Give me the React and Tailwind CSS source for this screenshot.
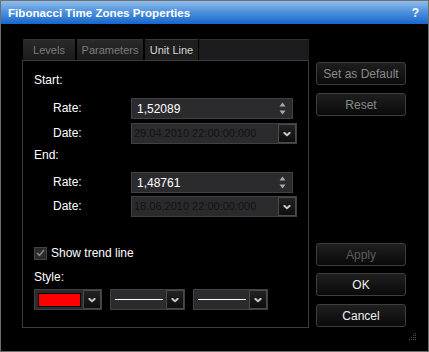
import React from "react";

const font = { fontFamily: '"Liberation Sans", Arial, sans-serif' };

function Chevron() {
  return (
    <svg width="8" height="6" viewBox="0 0 8 6">
      <polygon points="0.5,1 2,1 4,3 6,1 7.5,1 7.5,2.5 4,5.5 0.5,2.5" fill="#c8c8c8" />
    </svg>
  );
}

function DropBtn() {
  return (
    <div className="w-[18px] h-full flex items-center justify-center bg-linear-to-b from-[#222] to-[#0e0e0e] border border-[#4a4a4a]">
      <Chevron />
    </div>
  );
}

function Spin() {
  return (
    <div className="flex flex-col items-center gap-[3px] mr-[6px]">
      <svg width="7" height="5" viewBox="0 0 7 5">
        <polygon points="3.5,0.5 6.5,4.5 0.5,4.5" fill="#a8a8a8" />
      </svg>
      <svg width="7" height="5" viewBox="0 0 7 5">
        <polygon points="0.5,0.5 6.5,0.5 3.5,4.5" fill="#a8a8a8" />
      </svg>
    </div>
  );
}

function RateInput({ value }) {
  return (
    <div className="w-[162px] h-[21px] bg-[#2b2b2e] border border-[#414144] flex items-center justify-between">
      <span className="pl-[5px] text-[12px] text-white">{value}</span>
      <Spin />
    </div>
  );
}

function DateInput({ value }) {
  return (
    <div className="w-[166px] h-[21px] bg-[#2b2b2e] border border-[#414144] flex items-center">
      <span className="flex-1 pl-[2px] text-[11px] text-[#121212] whitespace-nowrap overflow-hidden">{value}</span>
      <DropBtn />
    </div>
  );
}

function Btn({ children, color, className = "" }) {
  return (
    <div
      className={`w-[90px] h-[23px] rounded-[3px] border border-[#3e3e3e] bg-linear-to-b from-[#1f1f1f] to-[#0a0a0a] flex items-center justify-center text-[12px] ${color} ${className}`}
    >
      {children}
    </div>
  );
}

function LineDrop() {
  return (
    <div className="w-[75px] h-[21px] bg-[#2b2b2e] border border-[#414144] flex items-center">
      <div className="flex-1 flex items-center pl-[4px] pr-[3px]">
        <div className="h-[1px] w-full bg-white" />
      </div>
      <DropBtn />
    </div>
  );
}

export default function App() {
  return (
    <div style={font} className="relative w-[429px] h-[352px] bg-black border border-[#6e6e6e] flex flex-col overflow-hidden">
      <div className="h-[23px] shrink-0 bg-linear-to-b from-[#8fbcea] via-[#4a8fdc] to-[#1666cc] flex items-center justify-between pl-[7px] pr-[9px]">
        <span className="text-[11.6px] font-bold text-white">Fibonacci Time Zones Properties</span>
        <span className="text-[12px] font-bold text-white">?</span>
      </div>
      <div className="flex pl-[21px] pt-[15px]">
        <div className="w-[287px] flex flex-col">
          <div className="h-[21px] flex text-[11px]">
            <div className="ml-[1px] w-[52px] bg-linear-to-b from-[#2a2a2a] to-[#1a1a1a] text-[#7c7c7c] flex items-center justify-center border-t border-[#333]">Levels</div>
            <div className="ml-[2px] w-[66px] bg-linear-to-b from-[#2a2a2a] to-[#1a1a1a] text-[#7c7c7c] flex items-center justify-center border-t border-[#333]">Parameters</div>
            <div className="ml-[2px] w-[53px] bg-[#1e1e1f] text-[#d6d6d6] flex items-center justify-center border-t border-[#3a3a3a]">Unit Line</div>
            <div className="ml-[1px] flex-1 bg-[#1c1c1e] border-t border-[#2e2e30]" />
          </div>
          <div className="h-[268px] border border-[#3c3c3e] flex flex-col pl-[11px] text-[12px] text-white">
            <div className="mt-[9px] h-[20px] flex items-center">Start:</div>
            <div className="mt-[8px] h-[21px] flex items-center">
              <span className="ml-[19px] w-[78px] -mt-[2px]">Rate:</span>
              <RateInput value="1,52089" />
            </div>
            <div className="mt-[4px] h-[21px] flex items-center">
              <span className="ml-[19px] w-[78px] -mt-[2px]">Date:</span>
              <DateInput value="29.04.2010 22:00:00:000" />
            </div>
            <div className="mt-[1px] h-[20px] flex items-center">End:</div>
            <div className="mt-[7px] h-[21px] flex items-center">
              <span className="ml-[19px] w-[78px] -mt-[2px]">Rate:</span>
              <RateInput value="1,48761" />
            </div>
            <div className="mt-[3px] h-[21px] flex items-center">
              <span className="ml-[19px] w-[78px] -mt-[2px]">Date:</span>
              <DateInput value="18.06.2010 22:00:00:000" />
            </div>
            <div className="mt-[26px] h-[20px] flex items-center">
              <div className="w-[13px] h-[13px] bg-[#2a2a2c] border border-[#444] flex items-center justify-center">
                <svg width="9" height="8" viewBox="0 0 9 8">
                  <polyline points="1,4 3.5,6.5 8,1" fill="none" stroke="#8a8a8a" strokeWidth="1.5" />
                </svg>
              </div>
              <span className="ml-[4px]">Show trend line</span>
            </div>
            <div className="mt-[4px] h-[20px] flex items-center">Style:</div>
            <div className="mt-[2px] h-[21px] flex items-center">
              <div className="w-[68px] h-[21px] bg-[#2b2b2e] border border-[#414144] flex items-center">
                <div className="flex-1 pl-[3px] pr-[2px]">
                  <div className="h-[14px] bg-[#ff0000] border border-black" />
                </div>
                <DropBtn />
              </div>
              <div className="ml-[8px]"><LineDrop /></div>
              <div className="ml-[8px]"><LineDrop /></div>
            </div>
          </div>
        </div>
        <div className="ml-[7px] pt-[23px] flex flex-col">
          <Btn color="text-[#8a8a8a]">Set as Default</Btn>
          <Btn color="text-[#8a8a8a]" className="mt-[8px]">Reset</Btn>
          <Btn color="text-[#5c5c5c]" className="mt-[127px]">Apply</Btn>
          <Btn color="text-[#f0f0f0]" className="mt-[7px]">OK</Btn>
          <Btn color="text-[#f0f0f0]" className="mt-[8px]">Cancel</Btn>
        </div>
      </div>
      <svg className="absolute right-[11px] bottom-[10px]" width="8" height="8" viewBox="0 0 8 8">
        <rect x="6" y="0" width="1" height="1" fill="#555" />
        <rect x="4" y="2" width="1" height="1" fill="#555" />
        <rect x="6" y="2" width="1" height="1" fill="#555" />
        <rect x="2" y="4" width="1" height="1" fill="#555" />
        <rect x="4" y="4" width="1" height="1" fill="#555" />
        <rect x="6" y="4" width="1" height="1" fill="#555" />
        <rect x="0" y="6" width="1" height="1" fill="#555" />
        <rect x="2" y="6" width="1" height="1" fill="#555" />
        <rect x="4" y="6" width="1" height="1" fill="#555" />
        <rect x="6" y="6" width="1" height="1" fill="#555" />
      </svg>
    </div>
  );
}
